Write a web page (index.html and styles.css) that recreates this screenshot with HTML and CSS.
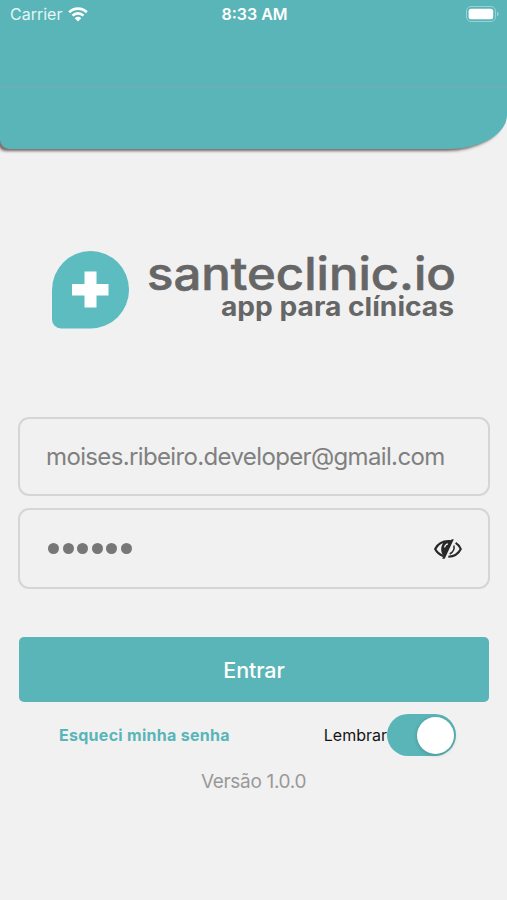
FILE: index.html
```html
<!DOCTYPE html>
<html lang="pt-BR">
  <head>
    <meta charset="UTF-8" />
    <meta name="viewport" content="width=device-width, initial-scale=1.0" />
    <title>santeclinic.io</title>
    <link rel="stylesheet" href="styles.css">
  </head>
  <body>
    <header class="header">
      <div class="status-bar">
        <div class="carrier">
          <span class="carrier-name">Carrier</span>
          <svg class="wifi" width="20" height="15" viewBox="0 0 20 15">
            <path d="M1.2 5.2a12.7 12.7 0 0 1 17.6 0M4.5 8.6a8 8 0 0 1 11 0" fill="none" stroke="#fff" stroke-width="2.6" />
            <path d="M6.7 11.2a5 5 0 0 1 6.6 0L10 14.6z" fill="#fff" />
          </svg>
        </div>
        <span class="time">8:33 AM</span>
        <svg class="battery" width="33" height="16" viewBox="0 0 33 16">
          <rect x="0.5" y="0.5" width="29" height="15" rx="4.5" fill="none" stroke="#9ad2d4" />
          <rect x="2.6" y="2.8" width="24.6" height="10.4" rx="2.5" fill="#fff" />
          <path d="M31 5.5a2.7 2.7 0 0 1 0 5z" fill="#9ad2d4" />
        </svg>
      </div>
    </header>

    <main>
      <div class="logo">
        <svg class="logo-mark" width="78" height="78" viewBox="0 0 78 78">
          <path d="M38.5 0a38.5 38.7 0 0 1 0 77.5H9a9 9 0 0 1-9-9V39A38.5 39 0 0 1 38.5 0z" fill="#5dbcc0" />
          <path d="M32.500 20.500h12v12.500h12v11.500h-12v12h-12v-12h-12.500v-11.500h12.500z" fill="#fff" />
        </svg>
        <svg class="logo-text" width="310" height="78" viewBox="0 0 310 78">
          <text class="brand" x="-1" y="39" textLength="309" lengthAdjust="spacingAndGlyphs">santeclinic.io</text>
          <text class="tagline" x="73" y="64.5" textLength="233" lengthAdjust="spacingAndGlyphs">app para clínicas</text>
        </svg>
      </div>

      <form class="login-form">
        <div class="field">
          <span class="email">moises.ribeiro.developer@gmail.com</span>
        </div>
        <div class="field password">
          <div class="dots">
            <i></i><i></i><i></i><i></i><i></i><i></i>
          </div>
          <svg class="eye" width="28" height="22" viewBox="0 0 28 22">
            <path d="M9.2 18C5.5 16.6 2.7 14 1.2 11 3.8 5.8 9.5 2.5 16.8 3.2" fill="none" stroke="#282828" stroke-width="2.2" />
            <path d="M17.8 1.3h2L10.7 20.7H8.3l1-3.2C6.3 14 6.3 7 10.6 3.8l5.8-.8z" fill="#282828" />
            <path d="M10.6 9.5c.3-1.9 1.5-3.2 3.3-3.6" fill="none" stroke="#f1f1f1" stroke-width="1.2" />
            <path d="M21.6 4.8c2.3 1.4 4.2 3.5 5.2 6.2-2.3 4.7-6.9 7.5-12.5 7.8" fill="none" stroke="#282828" stroke-width="2.1" />
            <path d="M19.8 7.5c1 3.2-.8 6.600-4.100 8.500" fill="none" stroke="#282828" stroke-width="1.5" />
          </svg>
        </div>
        <button type="button" class="btn-login">Entrar</button>
        <div class="options">
          <a class="forgot">Esqueci minha senha</a>
          <div class="remember">
            <span class="remember-label">Lembrar</span>
            <span class="switch"><span class="knob"></span></span>
          </div>
        </div>
      </form>
      <p class="version">Versão 1.0.0</p>
    </main>
  </body>
</html>
```

FILE: styles.css
```css
* {
  box-sizing: border-box;
}
body {
  margin: 0;
  height: 900px;
  background-color: #f1f1f1;
  font-family: Inter, "Liberation Sans", sans-serif;
  overflow: hidden;
}
.header {
  height: 149px;
  background: linear-gradient(#6cb0b6, #6cb0b6) 0 86px / 100% 2px no-repeat #5ab5b8;
  border-radius: 0 0 58px 9px / 0 0 34px 9px;
  box-shadow: -3px 3px 3px -1px rgba(70, 40, 40, 0.7);
}
.status-bar {
  display: grid;
  grid-template-columns: 1fr auto 1fr;
  align-items: center;
  height: 28px;
  padding: 0 8px 0 10px;
  color: #fff;
  font-size: 16px;
}
.carrier {
  display: flex;
  align-items: center;
  gap: 6px;
}
.carrier-name {
  color: #e4f5f5;
}
.time {
  font-weight: 600;
}
.battery {
  justify-self: end;
}
.logo {
  display: flex;
  gap: 18px;
  padding: 102px 0 0 52px;
}
.logo-text {
  overflow: visible;
}
.brand,
.tagline {
  fill: #666;
}
.brand {
  font-size: 45px;
  font-weight: 500;
  stroke: #666;
  stroke-width: 0.6px;
}
.tagline {
  font-size: 26px;
  font-weight: 700;
}
.login-form {
  padding: 88px 17px 0 18px;
}
.field {
  display: flex;
  align-items: center;
  height: 79px;
  margin-bottom: 12px;
  padding: 0 26px 0 28px;
  border: 2px solid #d5d5d5;
  border-radius: 11px;
  color: #808080;
}
.email {
  margin-left: -2px;
  font-size: 24px;
  letter-spacing: -0.64px;
  white-space: nowrap;
}
.password {
  justify-content: space-between;
  height: 81px;
  margin-bottom: 48px;
}
.dots {
  display: flex;
  gap: 3.6px;
}
.dots i {
  width: 11px;
  height: 11px;
  border-radius: 50%;
  background-color: #777;
}
.btn-login {
  display: block;
  width: 470px;
  height: 65px;
  margin-left: 1px;
  border: none;
  border-radius: 5px;
  background-color: #5ab5b8;
  color: #fff;
  font-family: inherit;
  font-size: 21.5px;
  font-weight: 500;
  letter-spacing: -0.1px;
}
.options {
  display: flex;
  align-items: center;
  justify-content: space-between;
  height: 42px;
  margin-top: 12px;
  padding: 0 34px 0 41px;
  font-size: 16px;
}
.forgot {
  color: #5ab5b8;
  font-weight: 700;
  letter-spacing: 0.28px;
}
.remember {
  display: flex;
  align-items: center;
  color: #151515;
}
.switch {
  display: flex;
  align-items: center;
  justify-content: flex-end;
  width: 69px;
  height: 42px;
  padding: 0 2px;
  border-radius: 21px;
  background-color: #5ab5b8;
}
.knob {
  width: 37px;
  height: 37px;
  border-radius: 50%;
  background-color: #fff;
  box-shadow: 0 1px 4px rgba(0, 0, 0, 0.2);
}
.version {
  margin: 14px 0 0;
  color: #999;
  font-size: 19px;
  letter-spacing: -0.32px;
  text-align: center;
}
```
